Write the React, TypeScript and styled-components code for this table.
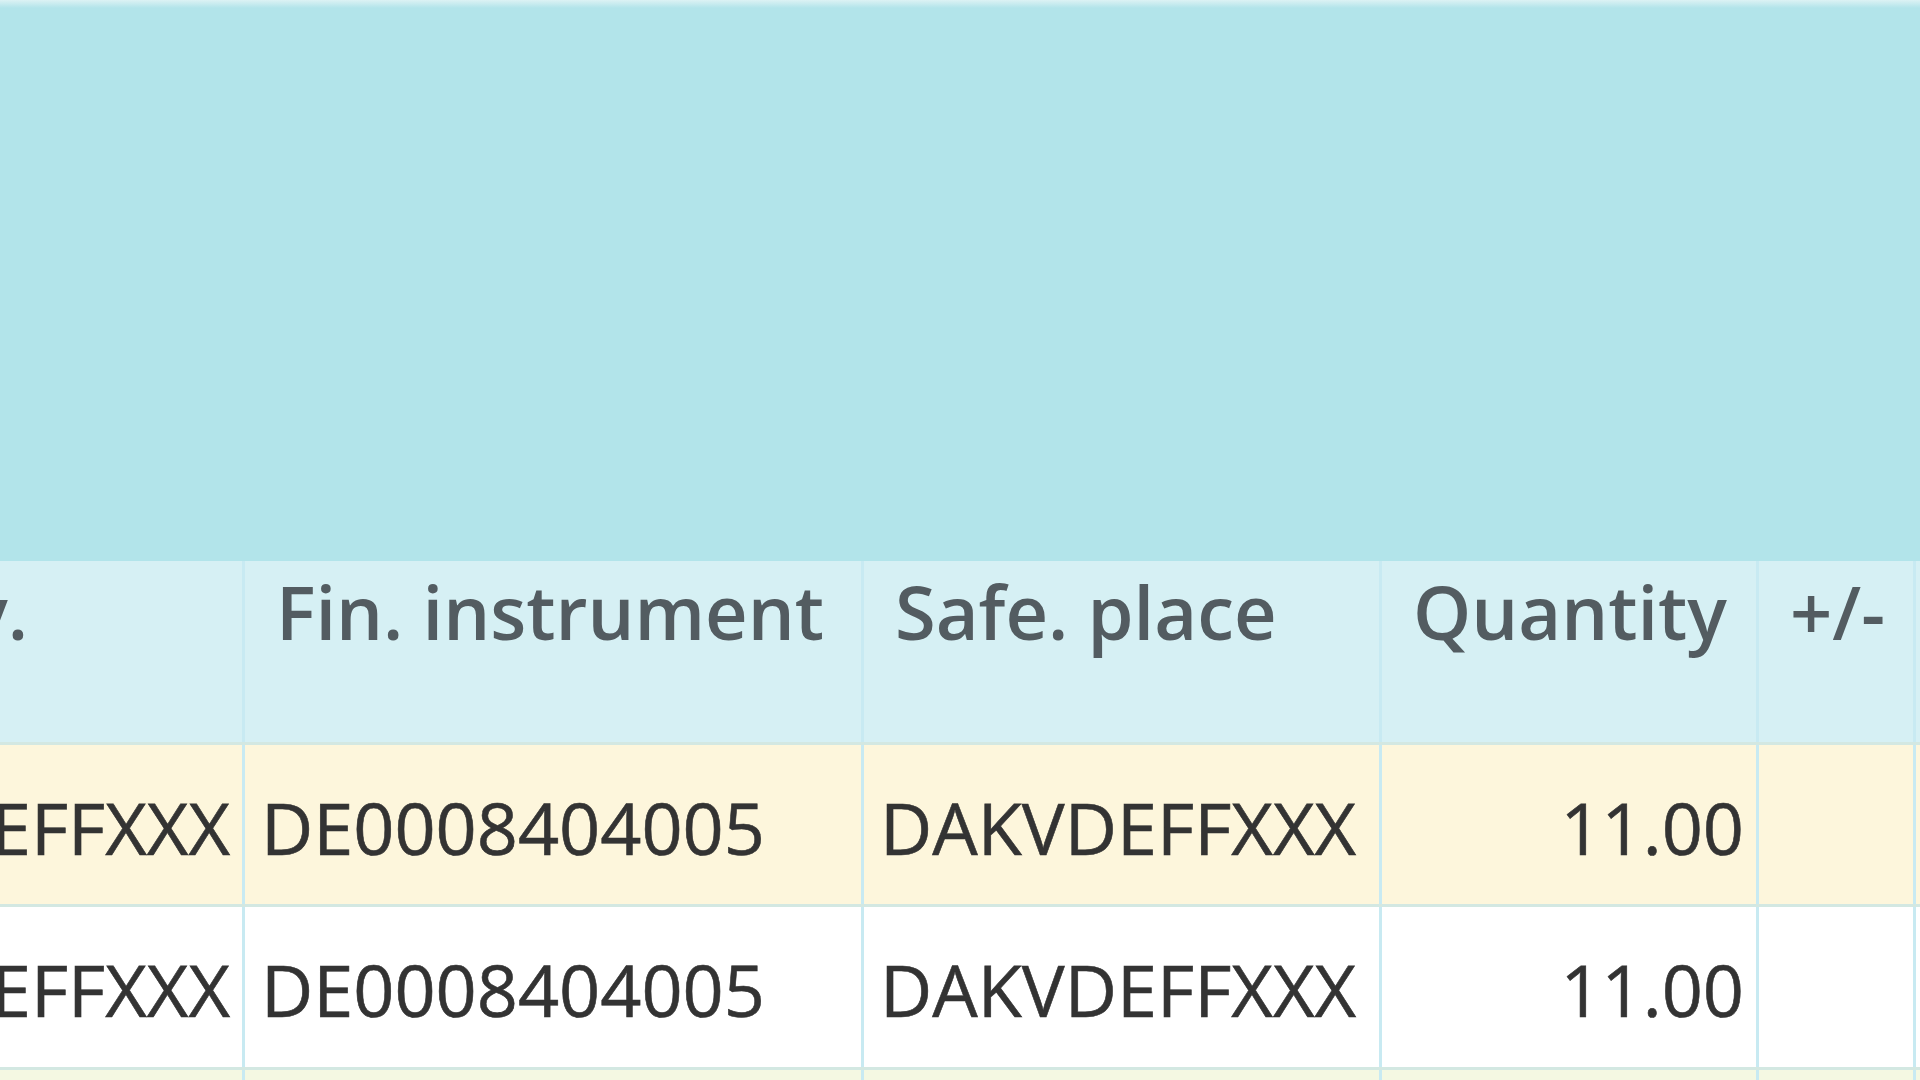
import React from 'react'
import styled, { createGlobalStyle } from 'styled-components'

const GlobalStyle = createGlobalStyle`
    html, body {
        margin: 0;
        padding: 0;
        background: #b2e4ea;
    }
    #root {
        width: 1920px;
        height: 1080px;
        overflow: hidden;
    }
`;

const colors = {
    banner: '#b2e4ea',
    header: '#d6f0f4',
    headerText: '#535c61',
    bodyText: '#333333',
    cellLine: '#c8eaf2',
    rowLine: '#d3e8e2',
    selected: '#fdf6dc',
    plain: '#ffffff',
    next: '#f4f8e2',
};

const columns = '505px 619px 518px 377px 157px 1fr';

const StyledPage = styled.div`
    display: flex;
    flex-direction: column;
    width: 1920px;
    height: 1080px;
    font-family: "Open Sans", "Lato", sans-serif;
`;

const StyledBanner = styled.div`
    height: 561px;
    flex-shrink: 0;
    background: linear-gradient(to bottom, #dcf2f4 0px, ${colors.banner} 8px, ${colors.banner} 100%);
`;

const StyledViewport = styled.div`
    flex: 1;
    overflow: hidden;
`;

const StyledTable = styled.div`
    margin-left: -260px;
    width: 2200px;
`;

const StyledRow = styled.div<{ $bg: string; $height: number }>`
    display: grid;
    grid-template-columns: ${columns};
    height: ${p => p.$height}px;
    background: ${p => p.$bg};
    border-bottom: 3px solid ${colors.rowLine};
    box-sizing: border-box;
`;

const StyledHeadCell = styled.div<{ $lead?: boolean }>`
    display: flex;
    justify-content: ${p => (p.$lead ? 'flex-end' : 'flex-start')};
    padding: 3px ${p => (p.$lead ? '214px' : '0')} 0 ${p => (p.$lead ? '0' : '31px')};
    border-right: 3px solid ${colors.cellLine};
    font-size: 74px;
    font-weight: 600;
    line-height: 96px;
    color: ${colors.headerText};
    white-space: nowrap;
`;

const StyledCell = styled.div<{ $right?: boolean }>`
    display: flex;
    align-items: center;
    justify-content: ${p => (p.$right ? 'flex-end' : 'flex-start')};
    padding: 4px ${p => (p.$right ? '12px' : '0')} 0 ${p => (p.$right ? '0' : '16px')};
    border-right: 3px solid ${colors.cellLine};
    font-size: 72px;
    color: ${colors.bodyText};
    -webkit-text-stroke: 0.6px ${colors.bodyText};
    white-space: nowrap;
`;

const StyledFirstCell = styled(StyledCell)`
    justify-content: flex-end;
    padding: 4px 12px 0 0;
`;

const headers = ['Safe. place dlv.', 'Fin. instrument', 'Safe. place', 'Quantity', '+/-', ''];

const rows = [
    { bg: colors.selected, height: 162 },
    { bg: colors.plain, height: 163 },
    { bg: colors.next, height: 163 },
];

const App = () => {
    return (
        <>
            <GlobalStyle />
            <StyledPage>
                <StyledBanner />
                <StyledViewport>
                    <StyledTable>
                        <StyledRow $bg={colors.header} $height={184}>
                            {headers.map((h, i) => (
                                <StyledHeadCell key={i} $lead={i === 0}>{h}</StyledHeadCell>
                            ))}
                        </StyledRow>
                        {rows.map((r, i) => (
                            <StyledRow key={i} $bg={r.bg} $height={r.height}>
                                <StyledFirstCell>DAKVDEFFXXX</StyledFirstCell>
                                <StyledCell>DE0008404005</StyledCell>
                                <StyledCell>DAKVDEFFXXX</StyledCell>
                                <StyledCell $right>11.00</StyledCell>
                                <StyledCell />
                                <StyledCell />
                            </StyledRow>
                        ))}
                    </StyledTable>
                </StyledViewport>
            </StyledPage>
        </>
    )
}

export default App
